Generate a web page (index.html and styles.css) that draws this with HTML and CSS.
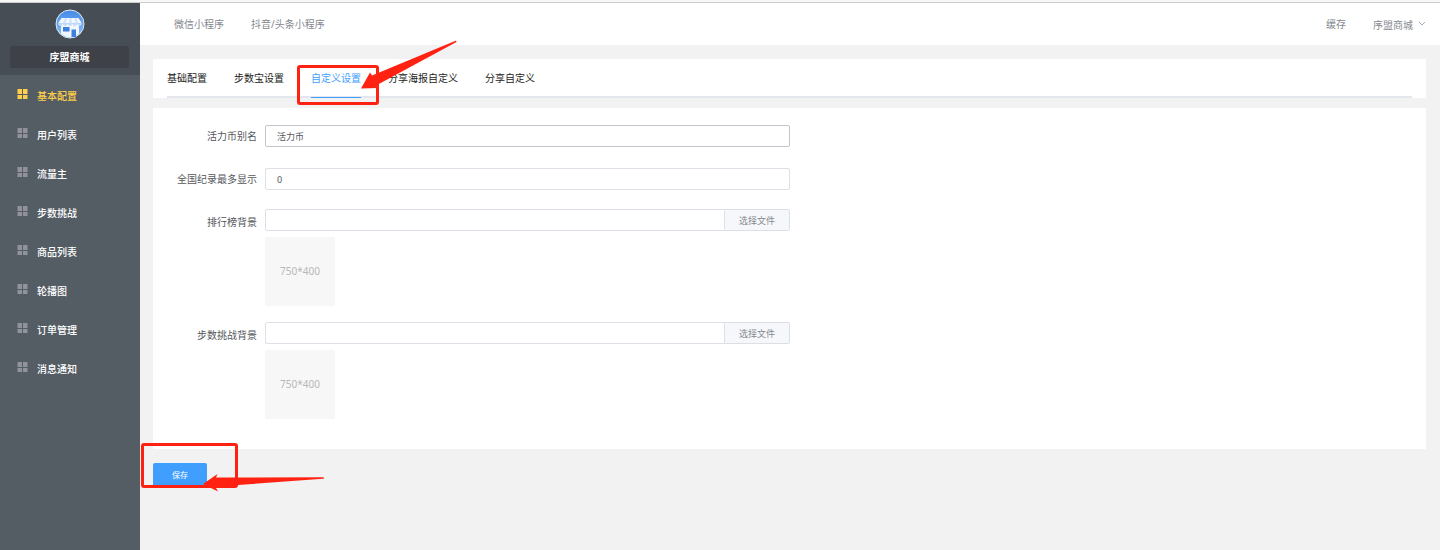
FILE: index.html
```html
<!DOCTYPE html>
<html lang="zh-CN">
<head>
    <meta charset="UTF-8">
    <meta name="viewport" content="width=device-width, initial-scale=1.0">
    <title>序盟商城</title>
    <link rel="stylesheet" href="styles.css">
</head>
<body>
    <svg width="0" height="0" class="sprite" aria-hidden="true">
        <symbol id="icon-grid" viewBox="0 0 11 11">
            <path d="M.5 0H5v5H.5zM6 0h4.500v5H6zM.5 6H5v4H.5zM6 6h4.500v4H6z"/>
        </symbol>
    </svg>

    <div class="layout">
        <aside class="sidebar">
            <div class="brand">
                <svg class="logo" viewBox="0 0 30 30">
                    <defs>
                        <linearGradient id="sky" x1="0" y1="0" x2="0" y2="1">
                            <stop offset="0" stop-color="#4389e6"/>
                            <stop offset="1" stop-color="#8cc0fa"/>
                        </linearGradient>
                    </defs>
                    <circle cx="15" cy="15" r="14" fill="url(#sky)" stroke="#dfe7ee"/>
                    <path d="M6 15h18v9.500a13 13 0 0 1-18 0z" fill="#f1f6fd"/>
                    <path d="M6.500 9h17l3.500 5.500H3z" fill="#f4f8fe"/>
                    <path d="M10 9h2l-1.500 5.500H7.500zM14.500 9h2l.5 5.500h-3zM19.500 9h2l2 5.500h-3z" fill="#d3e4fa"/>
                    <path d="M3 14.500h24a2.400 2.400 0 0 1-4.800 0 2.400 2.400 0 0 1-4.800 0 2.400 2.400 0 0 1-4.800 0 2.400 2.400 0 0 1-4.800 0 2.400 2.400 0 0 1-4.800 0z" fill="#c5dcf9"/>
                    <path d="M8 18h6.500v4.500H8zM16.500 20.500h4.500V28h-4.500z" fill="#3d7fdc"/>
                </svg>
                <div class="brand-name">序盟商城</div>
            </div>
            <nav class="menu">
                <a href="#" class="active"><svg><use href="#icon-grid"/></svg>基本配置</a>
                <a href="#"><svg><use href="#icon-grid"/></svg>用户列表</a>
                <a href="#"><svg><use href="#icon-grid"/></svg>流量主</a>
                <a href="#"><svg><use href="#icon-grid"/></svg>步数挑战</a>
                <a href="#"><svg><use href="#icon-grid"/></svg>商品列表</a>
                <a href="#"><svg><use href="#icon-grid"/></svg>轮播图</a>
                <a href="#"><svg><use href="#icon-grid"/></svg>订单管理</a>
                <a href="#"><svg><use href="#icon-grid"/></svg>消息通知</a>
            </nav>
        </aside>

        <div class="page">
            <header class="topbar">
                <nav class="links">
                    <a href="#">微信小程序</a>
                    <a href="#">抖音/头条小程序</a>
                </nav>
                <div class="links">
                    <a href="#">缓存</a>
                    <button type="button" class="account">
                        序盟商城
                        <svg viewBox="0 0 8 6"><path d="M1 1l3 3 3-3"/></svg>
                    </button>
                </div>
            </header>

            <main class="content">
                <section class="panel tabs-panel">
                    <nav class="tabs">
                        <a href="#">基础配置</a>
                        <a href="#">步数宝设置</a>
                        <a href="#" class="active">自定义设置
                            <span class="mark mark-tab"></span>
                            <svg class="arrow arrow-tab" viewBox="0 0 98 52">
                                <path d="M1 48.500L10 32.500l2 3L95 1c1.500-.5 2 .5 1 1.200L17 45l1 3z"/>
                            </svg>
                        </a>
                        <a href="#">分享海报自定义</a>
                        <a href="#">分享自定义</a>
                    </nav>
                </section>

                <form id="settings" class="panel form">
                    <div class="row">
                        <label for="alias">活力币别名</label>
                        <div class="field">
                            <input type="text" id="alias" class="hover" value="活力币">
                        </div>
                    </div>
                    <div class="row">
                        <label for="limit">全国纪录最多显示</label>
                        <div class="field">
                            <input type="text" id="limit" value="0">
                        </div>
                    </div>
                    <div class="row upload">
                        <label for="rankBg">排行榜背景</label>
                        <div class="field">
                            <div class="input-group">
                                <input type="text" id="rankBg">
                                <button type="button">选择文件</button>
                            </div>
                            <div class="thumb">750*400</div>
                        </div>
                    </div>
                    <div class="row upload">
                        <label for="stepBg">步数挑战背景</label>
                        <div class="field">
                            <div class="input-group">
                                <input type="text" id="stepBg">
                                <button type="button">选择文件</button>
                            </div>
                            <div class="thumb">750*400</div>
                        </div>
                    </div>
                </form>

                <div class="actions">
                    <button type="submit" form="settings" class="save">保存</button>
                    <span class="mark mark-save"></span>
                    <svg class="arrow arrow-save" viewBox="0 0 122 20">
                        <path d="M0 11L14.500 1 13 4.500l107-.2c1.500 0 1.500 1.200 0 1.400L35 12l-22 3 2 3.500z"/>
                    </svg>
                </div>
            </main>
        </div>
    </div>
</body>
</html>
```

FILE: styles.css
```css
* {
    margin: 0;
    padding: 0;
    box-sizing: border-box;
}

body {
    font-family: "Noto Sans", "Noto Sans CJK SC", sans-serif;
    font-size: 10px;
    line-height: 14px;
    color: #222;
    background: #f2f2f2;
    border-top: 2px solid #f7f7f7;
}

a {
    color: inherit;
    text-decoration: none;
}

button,
input {
    font-family: inherit;
    font-size: 9px;
    color: #55575c;
}

button {
    cursor: pointer;
}

.sprite {
    position: absolute;
}

.layout {
    display: flex;
    min-height: calc(100vh - 2px);
    border-top: 1px solid #ccc;
}

/* sidebar */
.sidebar {
    flex: 0 0 140px;
    background: #545c64;
    color: #fff;
}

.brand {
    height: 72px;
    padding: 6px 11px 0 10px;
    background: #474d54;
    text-align: center;
}

.logo {
    display: block;
    width: 30px;
    height: 30px;
    margin: 0 auto 7px;
}

.brand-name {
    border-radius: 2px;
    background: #3e4148;
    font-weight: 700;
    line-height: 22px;
}

.menu a {
    display: flex;
    align-items: center;
    gap: 9px;
    height: 39px;
    padding: 2px 17px 0;
    font-weight: 500;
}

.menu svg {
    width: 11px;
    height: 11px;
    margin-bottom: 2px;
    fill: #909399;
}

.menu .active {
    color: #ffd04b;
}

.menu .active svg {
    fill: #ffd04b;
}

/* top bar */
.page {
    flex: 1;
    min-width: 0;
}

.topbar {
    display: flex;
    justify-content: space-between;
    height: 42px;
    padding: 0 14px 0 34px;
    background: #fff;
    color: #85888e;
}

.links {
    display: flex;
    align-items: center;
    gap: 27px;
}

.account {
    display: flex;
    align-items: center;
    gap: 5px;
    border: 0;
    background: none;
    color: #85888e;
    font-size: 10px;
}

.account svg {
    width: 8px;
    height: 6px;
    fill: none;
    stroke: #a9acb2;
}

/* content */
.content {
    padding: 14px 14px 14px 13px;
}

.panel {
    background: #fff;
}

.tabs-panel {
    padding: 0 14px;
    margin-bottom: 10px;
}

.tabs {
    display: flex;
    gap: 27px;
    height: 39px;
    border-bottom: 2px solid #e4e7ed;
}

.tabs a {
    position: relative;
    height: 39px;
    line-height: 39px;
}

.tabs .active {
    color: #409eff;
    border-bottom: 1px solid #409eff;
}

.form {
    display: flex;
    flex-direction: column;
    gap: 15px;
    padding: 14px 14px 30px;
}

.row {
    display: flex;
    align-items: center;
    gap: 8px;
}

.row label {
    flex: 0 0 90px;
    color: #55575c;
    line-height: 28px;
    text-align: right;
    white-space: nowrap;
}

.field {
    flex: 1;
    max-width: 525px;
}

.field input {
    display: block;
    width: 100%;
    height: 22px;
    padding: 0 11px;
    border: 1px solid #dcdfe6;
    border-radius: 2px;
    background: #fff;
    outline: none;
}

.field .hover,
.field input:hover {
    border-color: #c0c4cc;
}

.upload {
    align-items: flex-start;
}

.upload .field {
    padding-top: 1px;
}

.input-group {
    display: flex;
}

.input-group input {
    flex: 1;
    border-radius: 2px 0 0 2px;
}

.input-group button {
    width: 65px;
    height: 22px;
    border: 1px solid #dcdfe6;
    border-left: 0;
    border-radius: 0 2px 2px 0;
    background: #f5f7fa;
    color: #85888e;
}

.thumb {
    width: 70px;
    height: 69px;
    margin-top: 6px;
    background: #f7f7f7;
    color: #b8b8b8;
    line-height: 69px;
    text-align: center;
}

.actions {
    position: relative;
    margin-top: 14px;
}

.save {
    display: block;
    width: 54px;
    height: 24px;
    padding-bottom: 2px;
    border: 0;
    border-radius: 2px;
    background: #409eff;
    color: #fff;
    font-size: 8px;
}

/* red guide marks */
.mark {
    position: absolute;
    border: 3px solid #ff2213;
    border-radius: 3px;
    pointer-events: none;
}

.mark-tab {
    top: 6px;
    left: -14px;
    width: 82px;
    height: 40px;
}

.mark-save {
    top: -20px;
    left: -12px;
    width: 97px;
    height: 45px;
}

.arrow {
    position: absolute;
    z-index: 1;
    fill: #ff2213;
    pointer-events: none;
}

.arrow-tab {
    top: -19px;
    left: 49px;
    width: 98px;
    height: 52px;
}

.arrow-save {
    top: 10px;
    left: 50px;
    width: 122px;
    height: 20px;
}
```
